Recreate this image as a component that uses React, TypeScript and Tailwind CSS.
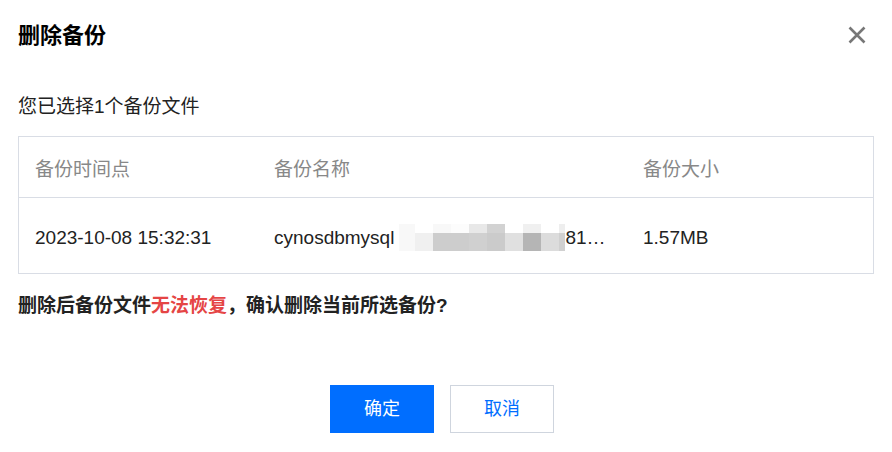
import React from 'react';

const font = '"Liberation Sans", "Noto Sans CJK SC", sans-serif';

// pixelated cover over part of the backup name
const mosaicCols = [16, 18, 18, 18, 18, 18, 18, 18, 18, 6];
const mosaicTop = ['#f8f8f8', '#ffffff', '#f8f8f8', '#fcfcfc', '#e8e8e8', '#d2d2d2', '#ffffff', '#f0f0f0', '#ffffff', '#eeeeee'];
const mosaicBottom = ['#f8f8f8', '#f0f0f0', '#cdcdcd', '#cdcdcd', '#d0d0d0', '#cbcbcb', '#e0e0e0', '#b5b5b5', '#dcdcdc', '#d0d0d0'];

function Mosaic() {
  return (
    <div className="flex flex-col w-[166px] shrink-0">
      <div className="flex h-[9px]">
        {mosaicCols.map((w, i) => (
          <div key={i} style={{ width: w, background: mosaicTop[i] }} />
        ))}
      </div>
      <div className="flex h-[18px]">
        {mosaicCols.map((w, i) => (
          <div key={i} style={{ width: w, background: mosaicBottom[i] }} />
        ))}
      </div>
    </div>
  );
}

export default function App() {
  return (
    <div className="w-[892px] h-[452px] bg-white px-[18px]" style={{ fontFamily: font }}>
      <div className="flex items-center justify-between h-[30px] mt-[20px]">
        <h2 className="text-[22px] font-bold text-[#000]">删除备份</h2>
        <button className="mr-[8px] text-[#777]">
          <svg width="18" height="18" viewBox="0 0 18 18">
            <path d="M1.5 1.5 L16.5 16.5 M16.5 1.5 L1.5 16.5" stroke="currentColor" strokeWidth="2.6" strokeLinecap="butt" />
          </svg>
        </button>
      </div>

      <p className="mt-[43px] text-[19px] leading-[28px] text-[#222]">您已选择1个备份文件</p>

      <div className="mt-[15px] border border-[#d9dde5] text-[19px]">
        <div className="grid grid-cols-[238px_369px_1fr] h-[61px] pt-[6px] items-center border-b border-[#d9dde5] text-[#888]">
          <div className="pl-[16px]">备份时间点</div>
          <div className="pl-[17px]">备份名称</div>
          <div className="pl-[17px]">备份大小</div>
        </div>
        <div className="grid grid-cols-[238px_369px_1fr] h-[75px] pt-[5px] items-center text-[#222]">
          <div className="pl-[16px]">2023-10-08 15:32:31</div>
          <div className="pl-[17px] flex items-center">
            <span>cynosdbmysql</span>
            <span className="ml-[5px] -mt-[2px]"><Mosaic /></span>
            <span>81…</span>
          </div>
          <div className="pl-[17px]">1.57MB</div>
        </div>
      </div>

      <p className="mt-[18px] text-[19px] leading-[28px] font-bold text-[#222]">
        删除后备份文件<span className="text-[#e54545]">无法恢复</span>，确认删除当前所选备份?
      </p>

      <div className="mt-[65px] flex justify-center gap-[16px] pr-[8px]">
        <button className="w-[104px] h-[48px] bg-[#006eff] text-white text-[18px]">确定</button>
        <button className="w-[104px] h-[48px] border border-[#cfd5de] bg-white text-[#006eff] text-[18px]">取消</button>
      </div>
    </div>
  );
}
